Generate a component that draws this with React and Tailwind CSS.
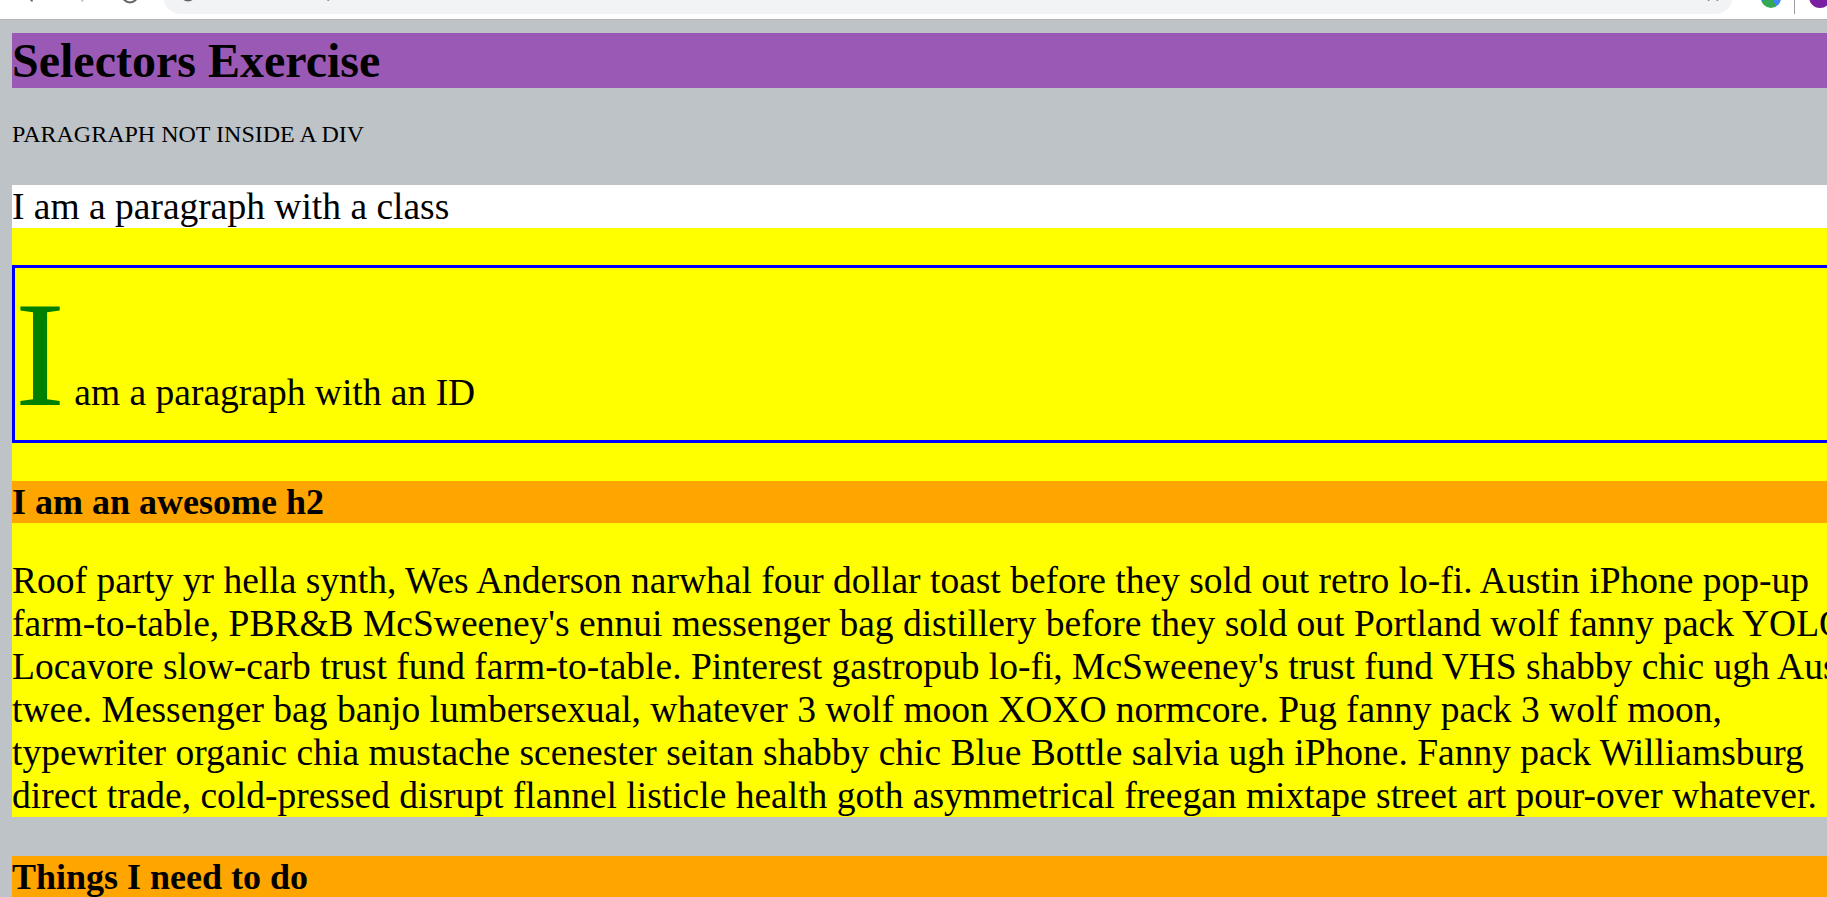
import React from "react";
import { ArrowLeft, ArrowRight, RotateCw, Info, Star } from "lucide-react";

export default function App() {
  return (
    <div className="w-[1827px] h-[897px] overflow-hidden bg-[#bdc3c7] font-['Liberation_Serif',serif] text-black">
      {/* browser chrome (bottom strip only) */}
      <div className="h-[20px] bg-white border-b border-[#b4b4b4] flex items-start overflow-hidden">
        <ArrowLeft size={20} strokeWidth={2} className="ml-[22px] mt-[-15px] shrink-0 text-[#5f6368]" />
        <ArrowRight size={20} strokeWidth={2} className="ml-[30px] mt-[-15px] shrink-0 text-[#b8bbbe]" />
        <RotateCw size={20} strokeWidth={2.4} className="ml-[28px] mt-[-15px] shrink-0 text-[#5f6368]" />
        <div className="ml-[23px] w-[1570px] h-[36px] mt-[-22px] shrink-0 rounded-full bg-[#f1f3f4] flex items-center">
          <Info size={18} strokeWidth={2.4} className="ml-[16px] mt-[-6px] shrink-0 text-[#5f6368]" />
          <span className="ml-[11px] mt-[-6px] text-[16px] font-['Roboto',sans-serif] whitespace-nowrap">
            <span className="text-[#202124]">127.0.0.1</span>
            <span className="text-[#80868b]">:5500/question.html</span>
          </span>
          <Star size={18} strokeWidth={2.2} className="ml-auto mr-[11px] mt-[-6px] shrink-0 text-[#5f6368]" />
        </div>
        <div className="ml-[28px] mt-[-12px] w-[20px] h-[20px] shrink-0 rounded-full bg-[conic-gradient(#4285f4_0_40%,#34a853_40%_70%,#1a73e8_70%_100%)]" />
        <div className="ml-[13px] w-px h-[14px] shrink-0 bg-[#9aa0a6]" />
        <div className="ml-[14px] mt-[-14px] w-[22px] h-[22px] shrink-0 rounded-full bg-[#7b1fa2]" />
      </div>

      {/* page body */}
      <div className="w-[2200px] pl-[12px] pt-[13px]">
        <h1 className="bg-[#9b59b6] text-[48px] font-bold leading-[55px] whitespace-nowrap">
          Selectors Exercise
        </h1>
        <p className="mt-[32px] text-[24px] leading-[28px] whitespace-nowrap">
          PARAGRAPH NOT INSIDE A DIV
        </p>

        <div className="mt-[37px] bg-[#ffff00]">
          <p className="bg-white text-[37.5px] leading-[43px] whitespace-nowrap">
            I am a paragraph with a class
          </p>
          <p className="mt-[37px] border-[3px] border-[#0000ff] text-[37.5px] leading-[41px] whitespace-nowrap">
            <span className="text-[150px] leading-[172px] text-[#008000]">I</span> am a paragraph with an ID
          </p>
          <h2 className="mt-[38px] bg-[#ffa500] text-[36px] font-bold leading-[42px] whitespace-nowrap">
            I am an awesome h2
          </h2>
          <p className="mt-[36px] text-[37.5px] leading-[43px] whitespace-nowrap">
            Roof party yr hella synth, Wes Anderson narwhal four dollar toast before they sold out retro lo-fi. Austin iPhone pop-up
            <br />
            farm-to-table, PBR&amp;B McSweeney's ennui messenger bag distillery before they sold out Portland wolf fanny pack YOLO.
            <br />
            Locavore slow-carb trust fund farm-to-table. Pinterest gastropub lo-fi, McSweeney's trust fund VHS shabby chic ugh Austin
            <br />
            twee. Messenger bag banjo lumbersexual, whatever 3 wolf moon XOXO normcore. Pug fanny pack 3 wolf moon,
            <br />
            typewriter organic chia mustache scenester seitan shabby chic Blue Bottle salvia ugh iPhone. Fanny pack Williamsburg
            <br />
            direct trade, cold-pressed disrupt flannel listicle health goth asymmetrical freegan mixtape street art pour-over whatever.
          </p>
        </div>

        <h2 className="mt-[39px] bg-[#ffa500] text-[36px] font-bold leading-[42px] whitespace-nowrap">
          Things I need to do
        </h2>
      </div>
    </div>
  );
}
